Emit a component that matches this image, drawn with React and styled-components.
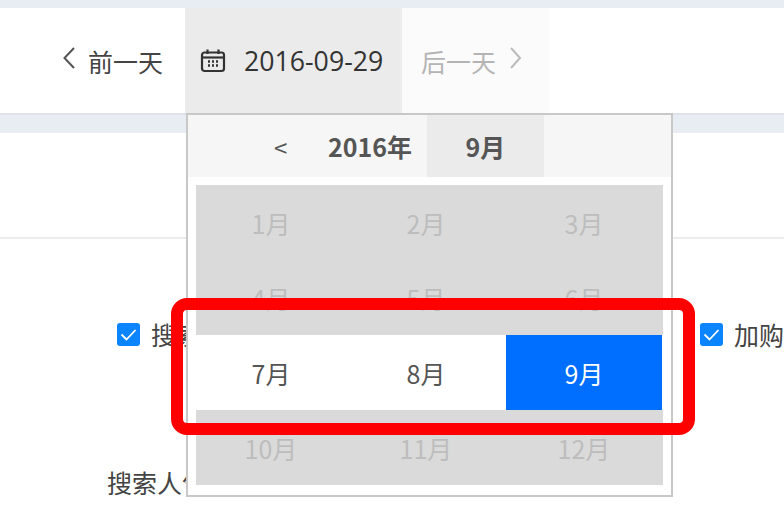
import React from "react";
import styled, { createGlobalStyle } from "styled-components";

const months = [
  ["1月", "2月", "3月"],
  ["4月", "5月", "6月"],
  ["7月", "8月", "9月"],
  ["10月", "11月", "12月"],
];

const App = () => {
  return (
    <Page>
      <GlobalStyle />
      <TopBar>
        <PrevCell>
          <ChevronLeft width="14" height="24" viewBox="0 0 14 24">
            <path d="M12 2 L2.5 12 L12 22" />
          </ChevronLeft>
          前一天
        </PrevCell>
        <DateCell>
          <CalendarIcon />
          <DateText>2016-09-29</DateText>
        </DateCell>
        <NextCell>
          后一天
          <ChevronRight width="14" height="24" viewBox="0 0 14 24">
            <path d="M3 2 L12 12 L3 22" />
          </ChevronRight>
        </NextCell>
      </TopBar>
      <Band />
      <Tabs />
      <CheckRow>
        <CheckItem>
          <CheckBox />
          搜索人数
        </CheckItem>
        <CheckItem>
          <CheckBox />
          加购
        </CheckItem>
      </CheckRow>
      <FieldLabel>搜索人气</FieldLabel>

      <Popup>
        <PopupHeader>
          <PrevYear>&lt;</PrevYear>
          <YearLabel>2016年</YearLabel>
          <MonthTab>9月</MonthTab>
        </PopupHeader>
        <MonthPanel>
          {months.map((row, i) => (
            <MonthRow key={i} $active={i === 2}>
              {row.map((m) => (
                <MonthCell key={m} $active={i === 2} $selected={m === "9月"}>
                  {m}
                </MonthCell>
              ))}
            </MonthRow>
          ))}
        </MonthPanel>
      </Popup>
      <Highlight />
    </Page>
  );
};

const CalendarIcon = () => (
  <svg width="26" height="26" viewBox="0 0 26 26" fill="none" stroke="#333" strokeWidth="2.2">
    <rect x="2" y="4.5" width="22" height="18.5" rx="2.5" />
    <path d="M2 9.5 H24" />
    <path d="M7.5 1.5 V6 M18.5 1.5 V6" />
    <path
      d="M8 13.5 H10 M12 13.5 H14 M16 13.5 H18 M8 17.5 H10 M12 17.5 H14 M16 17.5 H18"
      strokeWidth="2.4"
    />
  </svg>
);

const CheckBox = () => (
  <Box>
    <svg width="23" height="23" viewBox="0 0 23 23" fill="none" stroke="#fff" strokeWidth="1.8">
      <path d="M4.5 11.5 L9.5 16.5 L18.5 7" />
    </svg>
  </Box>
);

const GlobalStyle = createGlobalStyle`
  html, body {
    margin: 0;
    padding: 0;
    background: #fff;
  }
  * {
    box-sizing: border-box;
  }
`;

const Page = styled.div`
  position: relative;
  width: 784px;
  height: 509px;
  overflow: hidden;
  background: #fff;
  border-top: 8px solid #e8ecf3;
  color: #444;
  font-family: "Noto Sans CJK SC", "Noto Sans", sans-serif;
  font-size: 25px;
`;

const TopBar = styled.div`
  display: flex;
  height: 105px;
  background: #fff;
`;

const PrevCell = styled.div`
  width: 185px;
  display: flex;
  align-items: center;
  justify-content: flex-end;
  padding-right: 22px;
  gap: 12px;
`;

const DateCell = styled.div`
  width: 217px;
  display: flex;
  align-items: center;
  padding-left: 15px;
  gap: 18px;
  background: #ebebeb;
`;

const DateText = styled.span`
  font-family: "Open Sans", "Noto Sans", sans-serif;
  font-size: 26.7px;
  color: #333;
`;

const NextCell = styled.div`
  width: 147px;
  display: flex;
  align-items: center;
  padding-left: 19px;
  gap: 12px;
  background: #fbfbfb;
  color: #b4b4b4;
`;

const ChevronLeft = styled.svg`
  margin-top: -6px;
  fill: none;
  stroke: #555;
  stroke-width: 2;
`;

const ChevronRight = styled.svg`
  margin-top: -6px;
  fill: none;
  stroke: #bbb;
  stroke-width: 2;
`;

const Band = styled.div`
  height: 20px;
  background: #e8ecf3;
  border-top: 2px solid #dfe2e8;
`;

const Tabs = styled.div`
  height: 106px;
  border-bottom: 2px solid #ececec;
`;

const CheckRow = styled.div`
  display: flex;
  gap: 449px;
  padding: 81px 0 0 117px;
  height: 117px;
`;

const CheckItem = styled.div`
  display: flex;
  align-items: center;
  align-self: flex-start;
  gap: 11px;
  height: 28px;
  white-space: nowrap;
`;

const Box = styled.span`
  width: 23px;
  height: 23px;
  border-radius: 3px;
  background: #0a84ff;
  display: flex;
`;

const FieldLabel = styled.div`
  margin: 108px 0 0 107px;
  white-space: nowrap;
`;

const Popup = styled.div`
  position: absolute;
  left: 186px;
  top: 105px;
  width: 487px;
  height: 384px;
  background: #fff;
  border: 2px solid #c8c8c8;
`;

const PopupHeader = styled.div`
  display: flex;
  align-items: center;
  height: 62px;
  padding-left: 86px;
  background: #f6f6f6;
`;

const PrevYear = styled.span`
  width: 54px;
  font-size: 24px;
  color: #555;
`;

const YearLabel = styled.span`
  width: 99px;
  font-weight: 700;
  font-size: 25px;
  color: #555;
`;

const MonthTab = styled.span`
  width: 117px;
  height: 62px;
  display: flex;
  align-items: center;
  justify-content: center;
  background: #ebebeb;
  font-weight: 700;
  color: #555;
`;

const MonthPanel = styled.div`
  margin: 8px 8px 0 8px;
`;

const MonthRow = styled.div`
  display: grid;
  grid-template-columns: 150px 160px 156px;
  height: 75px;
  background: ${(props) => (props.$active ? "#fff" : "#dadada")};
`;

const MonthCell = styled.div`
  display: flex;
  align-items: center;
  justify-content: center;
  font-size: 25px;
  background: ${(props) => (props.$selected ? "#006eff" : "transparent")};
  color: ${(props) => {
    if (props.$selected) return "#fff";
    return props.$active ? "#555" : "#bdbdbd";
  }};
`;

const Highlight = styled.div`
  position: absolute;
  left: 171px;
  top: 290px;
  width: 524px;
  height: 137px;
  border: 12px solid #fe0000;
  border-radius: 16px;
`;

export default App;
